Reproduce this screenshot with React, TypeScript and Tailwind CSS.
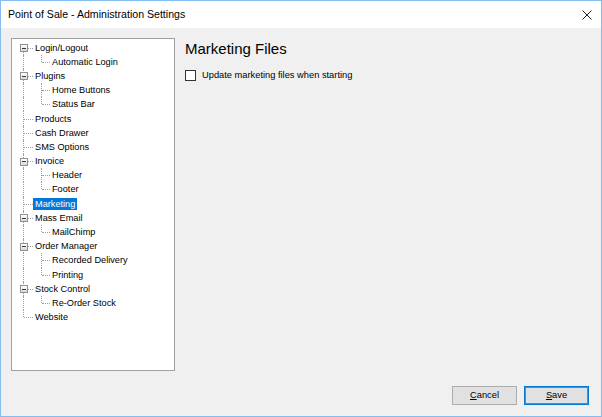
import React from "react";

type Node = {
  label: string;
  level: 0 | 1;
  open?: boolean;
  last?: boolean;
  selected?: boolean;
};

const nodes: Node[] = [
  { label: "Login/Logout", level: 0, open: true },
  { label: "Automatic Login", level: 1, last: true },
  { label: "Plugins", level: 0, open: true },
  { label: "Home Buttons", level: 1 },
  { label: "Status Bar", level: 1, last: true },
  { label: "Products", level: 0 },
  { label: "Cash Drawer", level: 0 },
  { label: "SMS Options", level: 0 },
  { label: "Invoice", level: 0, open: true },
  { label: "Header", level: 1 },
  { label: "Footer", level: 1, last: true },
  { label: "Marketing", level: 0, selected: true },
  { label: "Mass Email", level: 0, open: true },
  { label: "MailChimp", level: 1, last: true },
  { label: "Order Manager", level: 0, open: true },
  { label: "Recorded Delivery", level: 1 },
  { label: "Printing", level: 1, last: true },
  { label: "Stock Control", level: 0, open: true },
  { label: "Re-Order Stock", level: 1, last: true },
  { label: "Website", level: 0, last: true },
];

function TreeRow({ node, first }: { node: Node; first: boolean }) {
  const root = node.level === 0;
  return (
    <div className="relative h-[14.2px] flex items-center">
      {/* root vertical line */}
      {root ? (
        <span
          className={
            "absolute left-[11px] w-0 border-l border-dotted border-[#a0a0a0] " +
            (first ? "top-1/2 bottom-0" : node.last ? "top-0 h-1/2" : "top-0 bottom-0")
          }
        />
      ) : (
        <span className="absolute left-[11px] top-0 bottom-0 w-0 border-l border-dotted border-[#a0a0a0]" />
      )}
      {root ? (
        <span className="absolute left-[12px] w-[9px] top-1/2 h-0 border-t border-dotted border-[#a0a0a0]" />
      ) : (
        <>
          <span
            className={
              "absolute left-[29px] top-0 w-0 border-l border-dotted border-[#a0a0a0] " +
              (node.last ? "h-1/2" : "bottom-0")
            }
          />
          <span className="absolute left-[30px] w-[8px] top-1/2 h-0 border-t border-dotted border-[#a0a0a0]" />
        </>
      )}
      {node.open && (
        <span className="absolute left-[8px] top-[3.5px] w-[8px] h-[8px] border border-[#919191] bg-gradient-to-b from-white to-[#d8d8d8] flex items-center justify-center">
          <span className="w-[4px] h-px bg-[#3a3a3a]" />
        </span>
      )}
      <span
        className={
          (root ? "ml-[21px]" : "ml-[38px]") +
          " px-[2px] h-[12px] leading-[12px] whitespace-nowrap " +
          (node.selected ? "bg-[#0078d7] text-white" : "text-black")
        }
      >
        {node.label}
      </span>
    </div>
  );
}

export default function App() {
  return (
    <div
      className="w-[602px] h-[417px] border border-[#86bdf0] bg-[#f0f0f0] flex flex-col overflow-hidden"
      style={{ fontFamily: '"Liberation Sans", Arial, sans-serif' }}
    >
      {/* title bar */}
      <div className="h-[27px] bg-white flex items-center justify-between pl-[7px] pr-[9px]">
        <span className="text-[10.6px] text-black">Point of Sale - Administration Settings</span>
        <svg width="10" height="10" viewBox="0 0 10 10">
          <path d="M0.5 0.5 L9.5 9.5 M9.5 0.5 L0.5 9.5" stroke="#222" strokeWidth="1" />
        </svg>
      </div>

      <div className="flex-1 flex flex-col pt-[10px] pl-[10px] pr-[12px]">
        <div className="flex h-[333px] gap-[10px]">
          <div className="w-[164px] h-full bg-white border border-[#a0a0a0] pt-[1.5px] text-[9.2px]">
            {nodes.map((n, i) => (
              <TreeRow key={n.label} node={n} first={i === 0} />
            ))}
          </div>

          <div className="flex-1 flex flex-col">
            <div className="text-[15px] leading-[20px] text-black mt-[1px]">Marketing Files</div>
            <label className="flex items-center mt-[10px] text-[9.3px] text-black">
              <span className="w-[11px] h-[11px] border border-[#333] bg-white" />
              <span className="ml-[6px]">Update marketing files when starting</span>
            </label>
          </div>
        </div>

        <div className="flex justify-end gap-[7px] mt-[15px] text-[9.3px]">
          <button className="w-[65px] h-[19px] border border-[#adadad] bg-[#e1e1e1] text-black">
            <span className="underline">C</span>ancel
          </button>
          <button className="w-[65px] h-[19px] border border-[#0078d7] shadow-[inset_0_0_0_1px_#3d95e0] bg-[#e1e1e1] text-black">
            <span className="underline">S</span>ave
          </button>
        </div>
      </div>
    </div>
  );
}
